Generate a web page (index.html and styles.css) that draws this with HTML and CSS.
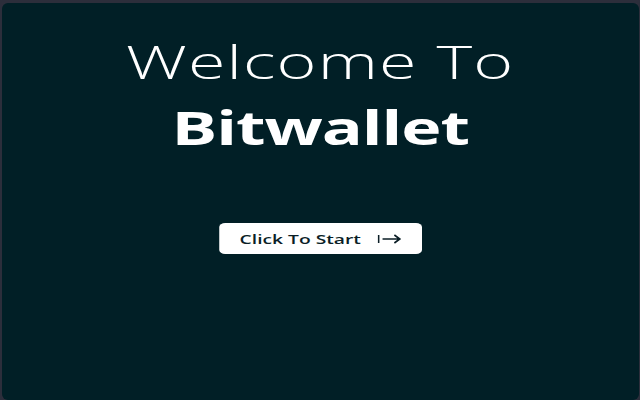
FILE: index.html
```html
<!DOCTYPE html>
<html lang="en">
<head>
<meta charset="utf-8">
<title>Bitwallet</title>
<link rel="stylesheet" href="styles.css">
</head>
<body>
<main class="panel">
  <div class="stage">
    <h1 class="title">
      <span class="title-light">Welcome To</span>
      <span class="title-bold">Bitwallet</span>
    </h1>
    <button class="start-btn" type="button">
      <span class="start-label">Click To Start</span>
      <svg class="start-icon" width="16" height="10" viewBox="0 0 24 10" preserveAspectRatio="none" aria-hidden="true">
        <path d="M1 1v8M5 5h18M17 1l5.5 4L17 9" fill="none" stroke="#0b1e26" stroke-width="1.7"/>
      </svg>
    </button>
  </div>
</main>
</body>
</html>
```
FILE: styles.css
```css
html, body {
  margin: 0;
  padding: 0;
  height: 100%;
}
body {
  background: #2c2e3b;
  padding: 3px 1px 0 2px;
  box-sizing: border-box;
  font-family: "Open Sans", "Noto Sans", sans-serif;
}
.panel {
  height: 100%;
  background: #011f26;
  border-radius: 6px;
  display: flex;
  flex-direction: column;
  align-items: center;
  box-sizing: border-box;
  padding-top: 27px;
}
.stage {
  display: flex;
  flex-direction: column;
  align-items: center;
  transform: scaleX(1.48);
}
.title {
  margin: 0;
  display: flex;
  flex-direction: column;
  align-items: center;
  gap: 4px;
  color: #ffffff;
  font-weight: normal;
}
.title-light {
  font-weight: 300;
  font-size: 46px;
  line-height: 62px;
  letter-spacing: 0.8px;
}
.title-bold {
  font-weight: 700;
  font-size: 46px;
  line-height: 62px;
  letter-spacing: -0.7px;
}
.start-btn {
  margin-top: 65px;
  width: 137px;
  height: 31px;
  border: none;
  border-radius: 4px;
  background: #ffffff;
  display: flex;
  align-items: center;
  padding: 0 0 0 14px;
  font-family: "Open Sans", "Noto Sans", sans-serif;
  font-size: 13px;
  font-weight: 600;
  color: #0b1e26;
}
.start-label {
  width: 93px;
  text-align: left;
}
.start-icon {
  display: block;
}
```
